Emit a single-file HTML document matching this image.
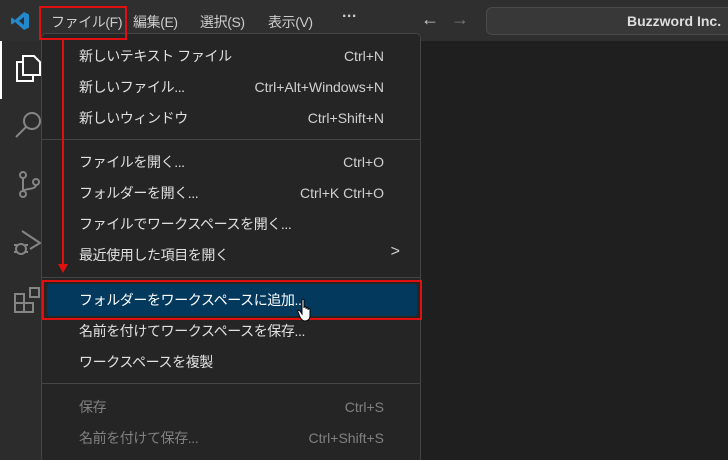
<!DOCTYPE html>
<html style="overflow:hidden;width:728px;height:460px"><head><meta charset="utf-8"><style>
*{margin:0;padding:0;box-sizing:border-box}
body{width:728px;height:460px;overflow:hidden;background:#1f1f1f;font-family:"Liberation Sans","Noto Sans CJK JP",sans-serif;position:relative;color:#ccc}
.title{position:absolute;left:0;top:0;width:728px;height:41px;background:#2f2f2f}
.act{position:absolute;left:0;top:41px;width:41px;height:419px;background:#2c2c2c}
.t{position:absolute;font-size:14px;color:#cccccc;white-space:nowrap;letter-spacing:-0.4px}
.menu{position:absolute;left:41px;top:33px;width:380px;height:430px;background:#252526;border:1px solid #454545;border-radius:5px;overflow:hidden}
.it{position:absolute;left:37px;font-size:14px;color:#e0e0e0;white-space:nowrap;letter-spacing:-0.4px}
.sc{position:absolute;right:36px;font-size:14px;color:#d0d0d0;white-space:nowrap;margin-top:2px}
.dis{color:#808080}
.sep{position:absolute;left:0;right:0;height:1px;background:#454545}
</style></head><body>
<div class="title"></div>
<svg style="position:absolute;left:10px;top:11px" width="20" height="20" viewBox="0 0 20 20"><path d="M14 1 L19 3.5 V16.5 L14 19 L5 11 L2 13.5 L1 12.5 V7.5 L2 6.5 L5 9 Z M14 6 L9 10 L14 14 Z" fill="#2489ca" fill-rule="evenodd"/></svg>
<div class="t" style="left:51px;top:12px">ファイル(F)</div>
<div class="t" style="left:133px;top:12px">編集(E)</div>
<div class="t" style="left:200px;top:12px">選択(S)</div>
<div class="t" style="left:268px;top:12px">表示(V)</div>
<div class="t" style="left:342px;top:8px;font-weight:bold;font-size:16px">···</div>
<div class="t" style="left:421px;top:9px;font-size:18px;color:#ccc">←</div>
<div class="t" style="left:451px;top:9px;font-size:18px;color:#777">→</div>
<div style="position:absolute;left:486px;top:7px;width:250px;height:28px;border:1px solid #4a4a4a;border-radius:6px;background:#383838"></div>
<div class="t" style="left:627px;top:13px;font-weight:bold;color:#ddd;letter-spacing:0">Buzzword Inc.</div>
<div class="act"></div>
<div style="position:absolute;left:0;top:41px;width:2px;height:58px;background:#fff"></div>
<svg style="position:absolute;left:14px;top:53px" width="28" height="30" viewBox="0 0 28 30" fill="none" stroke="#fff" stroke-width="2"><path d="M9 3 H20 L26 9 V22 H9 Z"/><path d="M9 9 H3 V28 H19 V22"/></svg>
<svg style="position:absolute;left:14px;top:110px" width="28" height="30" viewBox="0 0 28 30" fill="none" stroke="#858585" stroke-width="2"><circle cx="18" cy="11" r="8"/><path d="M12 17 L2 27"/></svg>
<svg style="position:absolute;left:15px;top:170px" width="28" height="30" viewBox="0 0 28 30" fill="none" stroke="#858585" stroke-width="2"><circle cx="8" cy="5" r="3"/><circle cx="8" cy="24" r="3"/><circle cx="21" cy="12" r="3"/><path d="M8 8 V21 M21 15 C21 20 10 18 8 21"/></svg>
<svg style="position:absolute;left:12px;top:227px" width="30" height="32" viewBox="0 0 30 32" fill="none" stroke="#858585" stroke-width="2"><path d="M10 4 L28 16 L18 22"/><circle cx="9" cy="22" r="5"/><path d="M2 18 H5 M13 18 H16 M2 25 H5 M13 25 H16"/></svg>
<svg style="position:absolute;left:12px;top:285px" width="30" height="30" viewBox="0 0 30 30" fill="none" stroke="#858585" stroke-width="2"><path d="M3 9 H12 V27 H3 Z M3 18 H21 V27 H12 M18 3 H27 V12 H18 Z"/></svg>
<div class="menu">
<div class="it" style="top:12px">新しいテキスト ファイル</div><div class="sc" style="top:12px">Ctrl+N</div>
<div class="it" style="top:43px">新しいファイル...</div><div class="sc" style="top:43px">Ctrl+Alt+Windows+N</div>
<div class="it" style="top:74px">新しいウィンドウ</div><div class="sc" style="top:74px">Ctrl+Shift+N</div>
<div class="sep" style="top:105px"></div>
<div class="it" style="top:118px">ファイルを開く...</div><div class="sc" style="top:118px">Ctrl+O</div>
<div class="it" style="top:149px">フォルダーを開く...</div><div class="sc" style="top:149px">Ctrl+K Ctrl+O</div>
<div class="it" style="top:180px">ファイルでワークスペースを開く...</div>
<div class="it" style="top:211px">最近使用した項目を開く</div><div class="sc" style="top:207px;right:20px;font-size:16px">&gt;</div>
<div class="sep" style="top:243px"></div>
<div style="position:absolute;left:5px;top:250px;width:370px;height:32px;background:#04395e;border-radius:3px"></div>
<div class="it" style="top:256px;color:#fff">フォルダーをワークスペースに追加...</div>
<div class="it" style="top:287px">名前を付けてワークスペースを保存...</div>
<div class="it" style="top:318px">ワークスペースを複製</div>
<div class="sep" style="top:349px"></div>
<div class="it dis" style="top:363px">保存</div><div class="sc dis" style="top:363px">Ctrl+S</div>
<div class="it dis" style="top:394px">名前を付けて保存...</div><div class="sc dis" style="top:394px">Ctrl+Shift+S</div>
</div>
<div style="position:absolute;left:39px;top:6px;width:88px;height:34px;border:2px solid #e01010"></div>
<div style="position:absolute;left:62px;top:40px;width:2px;height:225px;background:#e01010"></div>
<div style="position:absolute;left:58px;top:264px;width:0;height:0;border-left:5px solid transparent;border-right:5px solid transparent;border-top:9px solid #e01010"></div>
<div style="position:absolute;left:42px;top:280px;width:380px;height:40px;border:2px solid #e01010"></div>
<svg style="position:absolute;left:297px;top:298px" width="18" height="24" viewBox="0 0 18 24"><path d="M5 2 C5 1 7 1 7 2 V10 C7 8 9 8 9 10 V11 C9 9 11 9 11 11 V12 C11 10 13 10 13 12 V18 C13 21 11 23 8 23 C6 23 4 21 3 19 L1 14 C0 12 2 12 3 13 L5 16 Z" fill="#fff" stroke="#000" stroke-width="1"/></svg>
</body></html>
